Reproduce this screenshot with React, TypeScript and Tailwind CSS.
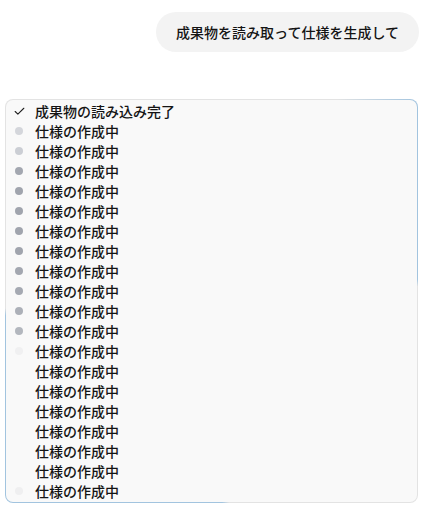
import { Check } from 'lucide-react';

const DOT_COLORS = [
  'bg-[#d4d6db]',
  'bg-[#cbced4]',
  'bg-[#a3a7b0]',
  'bg-[#a0a4ad]',
  'bg-[#a0a4ad]',
  'bg-[#a0a4ad]',
  'bg-[#a0a4ad]',
  'bg-[#a3a7b0]',
  'bg-[#a5a9b2]',
  'bg-[#acb0b8]',
  'bg-[#b3b7be]',
  'bg-[#f0f0f1]',
  'bg-transparent',
  'bg-transparent',
  'bg-transparent',
  'bg-transparent',
  'bg-transparent',
  'bg-transparent',
  'bg-[#efeff0]',
];

export default function App() {
  return (
    <div className="w-[431px] h-[511px] bg-white overflow-hidden font-['Noto_Sans_CJK_JP','Noto_Sans',sans-serif] text-[#141414]">
      <div className="flex justify-end pt-3 pr-3">
        <div className="h-10 flex items-center px-5 rounded-full bg-[#f3f3f3] text-sm font-medium">
          成果物を読み取って仕様を生成して
        </div>
      </div>

      <div className="mt-[47px] ml-[5px] w-[413px] h-[404px] rounded-lg p-px bg-[conic-gradient(from_0deg_at_50%_50%,#e3e3e3_0deg,#e3e3e3_32deg,#a2c4df_46deg,#a2c4df_84deg,#e3e3e3_86deg,#e3e3e3_175deg,#a2c4df_177deg,#a2c4df_266deg,#e3e3e3_268deg,#e3e3e3_360deg)]">
        <div className="h-full rounded-[7px] bg-[#f9f9f9] overflow-hidden pt-[1px] pl-[5px] text-sm font-medium">
          <div className="flex items-center h-5 gap-2">
            <span className="w-4 flex justify-center">
              <Check size={13} strokeWidth={2} className="text-[#222]" />
            </span>
            <span>成果物の読み込み完了</span>
          </div>
          {DOT_COLORS.map((c, i) => (
            <div key={i} className="flex items-center h-5 gap-2">
              <span className="w-4 flex justify-center">
                <span className={`w-2 h-2 rounded-full ${c}`} />
              </span>
              <span>仕様の作成中</span>
            </div>
          ))}
        </div>
      </div>
    </div>
  );
}
